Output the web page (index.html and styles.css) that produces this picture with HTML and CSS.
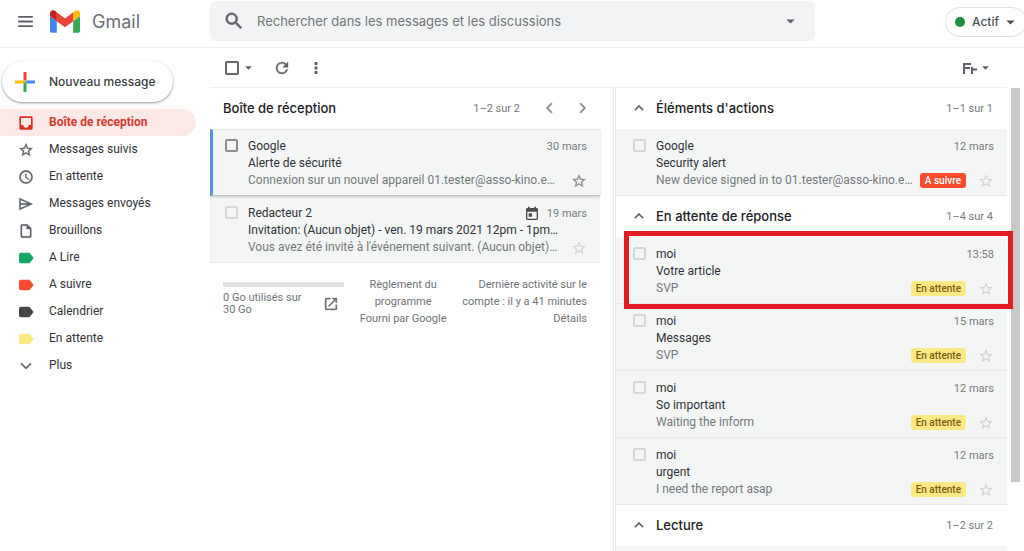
FILE: index.html
```html
<!DOCTYPE html>
<html lang="fr">
<head>
<meta charset="utf-8">
<title>Gmail</title>
<link rel="stylesheet" href="styles.css">
</head>
<body>
<svg class="defs" aria-hidden="true">
  <symbol id="star" viewBox="0 0 24 24"><path d="M22 9.24l-7.19-.62L12 2 9.19 8.63 2 9.24l5.46 4.73L5.82 21 12 17.27 18.18 21l-1.63-7.03L22 9.24zM12 15.4l-3.76 2.27 1-4.28-3.32-2.88 4.38-.38L12 6.1l1.71 4.04 4.38.38-3.32 2.88 1 4.28L12 15.4z"/></symbol>
  <symbol id="tag" viewBox="0 0 24 24"><path d="M17.2 4H4.500Q1.500 4 1.500 7v10q0 3 3 3H17.200L23.500 12z"/></symbol>
  <symbol id="down" viewBox="0 0 10 6"><path d="M0 .5h10L5 5.500z"/></symbol>
  <symbol id="up" viewBox="0 0 24 24"><path d="M12 8l-6 6 1.410 1.410L12 10.830l4.590 4.580L18 14z"/></symbol>
</svg>
<header class="topbar">
  <div class="brand">
    <button class="icon-btn" aria-label="Menu principal"><svg class="menu" viewBox="0 0 16 12"><path d="M0 0h16v2H0zM0 5h16v2H0zM0 10h16v2H0z"/></svg></button>
    <svg class="logo" viewBox="52 42 88 66" aria-hidden="true">
      <path fill="#4285f4" d="M58 108h14V74L52 59v43c0 3.320 2.690 6 6 6"/>
      <path fill="#34a853" d="M120 108h14c3.320 0 6-2.690 6-6V59l-20 15"/>
      <path fill="#fbbc04" d="M120 48v26l20-15v-8c0-7.420-8.470-11.650-14.400-7.200"/>
      <path fill="#ea4335" d="M72 74V48l24 18 24-18v26L96 92"/>
      <path fill="#c5221f" d="M52 51v8l20 15V48l-5.600-4.200c-5.940-4.450-14.400-.22-14.400 7.200"/>
    </svg>
    <span class="brand-name">Gmail</span>
  </div>
  <form class="search" role="search">
    <button type="button" class="icon-btn" aria-label="Rechercher"><svg class="i20" viewBox="0 0 24 24"><path stroke="currentColor" stroke-width=".6" d="M15.500 14h-.79l-.28-.27A6.470 6.470 0 0 0 16 9.500 6.500 6.500 0 1 0 9.500 16c1.610 0 3.090-.59 4.230-1.570l.27.28v.79l5 4.990L20.490 19l-4.990-5zm-6 0C7.010 14 5 11.990 5 9.500S7.010 5 9.500 5 14 7.010 14 9.500 11.990 14 9.500 14z"/></svg></button>
    <input class="search-input" type="text" aria-label="Rechercher" placeholder="Rechercher dans les messages et les discussions">
    <button type="button" class="icon-btn" aria-label="Options de recherche"><svg class="caret big"><use href="#down"/></svg></button>
  </form>
  <button class="status"><span class="dot"></span>Actif<svg class="caret big"><use href="#down"/></svg></button>
</header>
<div class="app">
  <nav class="sidebar">
    <button class="compose"><svg class="plus" viewBox="0 0 20 20"><path fill="#ea4335" d="M8.500 0h3v8.500h-3z"/><path fill="#fbbc04" d="M0 8.500h11.500l-3 3H0z"/><path fill="#34a853" d="M8.500 11.500l3-3V20h-3z"/><path fill="#4285f4" d="M11.500 8.500H20v3h-8.500z"/></svg>Nouveau message</button>
    <a class="nav-item active" href="#"><svg viewBox="0 0 24 24"><path d="M20 2H4a2 2 0 0 0-2 2v16a2 2 0 0 0 2 2h16a2 2 0 0 0 2-2V4a2 2 0 0 0-2-2zm-.5 13H16a4 4 0 0 1-8 0H4.500V4.500h15z"/></svg>Boîte de réception</a>
    <a class="nav-item" href="#"><svg class="bold"><use href="#star"/></svg>Messages suivis</a>
    <a class="nav-item" href="#"><svg class="bold" viewBox="0 0 24 24"><path d="M12 2a10 10 0 1 0 0 20 10 10 0 0 0 0-20zm0 18a8 8 0 1 1 0-16 8 8 0 0 1 0 16zm.5-13H11v6l5.200 3.200.8-1.300-4.500-2.700z"/></svg>En attente</a>
    <a class="nav-item" href="#"><svg class="bold" viewBox="0 0 24 24"><path d="M2 3v18l20-9L2 3zm2 3l11 5H4V6zm0 12v-5h11L4 18z"/></svg>Messages envoyés</a>
    <a class="nav-item" href="#"><svg class="bold" viewBox="0 0 24 24"><path d="M14 2H6a2 2 0 0 0-2 2v16a2 2 0 0 0 2 2h12a2 2 0 0 0 2-2V8l-6-6zM6 20V4h7v5h5v11H6z"/></svg>Brouillons</a>
    <a class="nav-item" href="#"><svg class="green"><use href="#tag"/></svg>A Lire</a>
    <a class="nav-item" href="#"><svg class="red"><use href="#tag"/></svg>A suivre</a>
    <a class="nav-item" href="#"><svg class="dark"><use href="#tag"/></svg>Calendrier</a>
    <a class="nav-item" href="#"><svg class="yellow"><use href="#tag"/></svg>En attente</a>
    <a class="nav-item" href="#"><svg class="bold" viewBox="0 0 24 24"><path d="M5.500 7.500l6.500 6.500 6.500-6.500L20 9l-8 8-8-8z"/></svg>Plus</a>
  </nav>
  <main class="main">
    <div class="toolbar">
      <input class="check strong" type="checkbox" aria-label="Tout sélectionner">
      <button class="icon-btn select-caret" aria-label="Sélectionner"><svg class="caret"><use href="#down"/></svg></button>
      <button class="icon-btn refresh" aria-label="Actualiser"><svg class="i18 bold" viewBox="0 0 24 24"><path d="M17.650 6.350A7.960 7.960 0 0 0 12 4a8 8 0 1 0 7.730 10h-2.080A6 6 0 1 1 12 6c1.660 0 3.140.69 4.220 1.780L13 11h7V4z"/></svg></button>
      <button class="icon-btn" aria-label="Plus d'options"><svg class="i18" viewBox="0 0 24 24"><path d="M10 4h4v4h-4zM10 10h4v4h-4zM10 16h4v4h-4z"/></svg></button>
      <button class="icon-btn lang" aria-label="Outils de saisie"><svg class="fr" viewBox="0 0 14 12"><path d="M0 1h8v2H2v2h5v2H2v5H0zM8 5h2v1.500h4v2h-4V12H8z"/></svg><svg class="caret"><use href="#down"/></svg></button>
    </div>
    <div class="panes">
      <section class="pane inbox">
        <div class="head"><h2>Boîte de réception</h2><span class="count">1–2 sur 2</span>
          <button class="icon-btn pager" aria-label="Précédent"><svg class="i18 bold" viewBox="0 0 24 24"><path d="M15 5l1.500 1.500L11 12l5.500 5.500L15 19l-7-7z"/></svg></button>
          <button class="icon-btn pager" aria-label="Suivant"><svg class="i18 bold" viewBox="0 0 24 24"><path d="M9 5L7.500 6.500 13 12l-5.500 5.500L9 19l7-7z"/></svg></button>
        </div>
        <article class="mail current">
          <input class="check mid" type="checkbox" aria-label="Google">
          <div class="body">
            <div class="line"><span class="from">Google</span><time>30 mars</time></div>
            <div class="line subject">Alerte de sécurité</div>
            <div class="line"><span class="snippet">Connexion sur un nouvel appareil 01.tester@asso-kino.e…</span><button class="icon-btn fav" aria-label="Suivre"><svg class="i16 bold"><use href="#star"/></svg></button></div>
          </div>
        </article>
        <article class="mail">
          <input class="check" type="checkbox" aria-label="Redacteur 2">
          <div class="body">
            <div class="line"><span class="from">Redacteur 2</span><svg class="cal" viewBox="0 0 24 24"><path d="M19 3h-1V1h-2.500v2h-7V1H6v2H5a2 2 0 0 0-2 2v14a2 2 0 0 0 2 2h14a2 2 0 0 0 2-2V5a2 2 0 0 0-2-2zm0 16H5V8.500h14V19zM7 11h5v5H7z"/></svg><time>19 mars</time></div>
            <div class="line subject">Invitation: (Aucun objet) - ven. 19 mars 2021 12pm - 1pm…</div>
            <div class="line"><span class="snippet">Vous avez été invité à l'événement suivant. (Aucun objet)…</span><button class="icon-btn fav" aria-label="Suivre"><svg class="i16"><use href="#star"/></svg></button></div>
          </div>
        </article>
        <footer class="foot">
          <div class="quota">
            <div class="bar"></div>
            <div class="usage"><span>0 Go utilisés sur<br>30 Go</span><a href="#" aria-label="Gérer"><svg class="i16 bold" viewBox="0 0 24 24"><path d="M19 19H5V5h6V3H5a2 2 0 0 0-2 2v14a2 2 0 0 0 2 2h14a2 2 0 0 0 2-2v-6h-2v6zM14 3v2h3.590l-9.830 9.830 1.410 1.410L19 6.410V10h2V3h-7z"/></svg></a></div>
          </div>
          <div class="terms">Règlement du<br>programme<br>Fourni par Google</div>
          <div class="activity">Dernière activité sur le<br>compte : il y a 41 minutes<br>Détails</div>
        </footer>
      </section>
      <section class="pane side">
        <div class="head"><button class="icon-btn fold" aria-label="Réduire"><svg class="i18 bold"><use href="#up"/></svg></button><h2>Éléments d'actions</h2><span class="count">1–1 sur 1</span></div>
        <article class="mail">
          <input class="check" type="checkbox" aria-label="Google">
          <div class="body">
            <div class="line"><span class="from">Google</span><time>12 mars</time></div>
            <div class="line subject">Security alert</div>
            <div class="line"><span class="snippet">New device signed in to 01.tester@asso-kino.e…</span><span class="label todo">A suivre</span><button class="icon-btn fav" aria-label="Suivre"><svg class="i16"><use href="#star"/></svg></button></div>
          </div>
        </article>
        <div class="head"><button class="icon-btn fold" aria-label="Réduire"><svg class="i18 bold"><use href="#up"/></svg></button><h2>En attente de réponse</h2><span class="count">1–4 sur 4</span></div>
        <article class="mail framed">
          <input class="check" type="checkbox" aria-label="Votre article">
          <div class="body">
            <div class="line"><span class="from">moi</span><time>13:58</time></div>
            <div class="line subject">Votre article</div>
            <div class="line"><span class="snippet">SVP</span><span class="label">En attente</span><button class="icon-btn fav" aria-label="Suivre"><svg class="i16"><use href="#star"/></svg></button></div>
          </div>
        </article>
        <article class="mail">
          <input class="check" type="checkbox" aria-label="Messages">
          <div class="body">
            <div class="line"><span class="from">moi</span><time>15 mars</time></div>
            <div class="line subject">Messages</div>
            <div class="line"><span class="snippet">SVP</span><span class="label">En attente</span><button class="icon-btn fav" aria-label="Suivre"><svg class="i16"><use href="#star"/></svg></button></div>
          </div>
        </article>
        <article class="mail">
          <input class="check" type="checkbox" aria-label="So important">
          <div class="body">
            <div class="line"><span class="from">moi</span><time>12 mars</time></div>
            <div class="line subject">So important</div>
            <div class="line"><span class="snippet">Waiting the inform</span><span class="label">En attente</span><button class="icon-btn fav" aria-label="Suivre"><svg class="i16"><use href="#star"/></svg></button></div>
          </div>
        </article>
        <article class="mail">
          <input class="check" type="checkbox" aria-label="urgent">
          <div class="body">
            <div class="line"><span class="from">moi</span><time>12 mars</time></div>
            <div class="line subject">urgent</div>
            <div class="line"><span class="snippet">I need the report asap</span><span class="label">En attente</span><button class="icon-btn fav" aria-label="Suivre"><svg class="i16"><use href="#star"/></svg></button></div>
          </div>
        </article>
        <div class="head"><button class="icon-btn fold" aria-label="Réduire"><svg class="i18 bold"><use href="#up"/></svg></button><h2>Lecture</h2><span class="count">1–2 sur 2</span></div>
        <div class="next"></div>
      </section>
      <div class="scroll"><div class="thumb"></div></div>
    </div>
  </main>
</div>
</body>
</html>
```
FILE: styles.css
```css
* { box-sizing: border-box; }
body {
  margin: 0;
  height: 100vh;
  display: flex;
  flex-direction: column;
  overflow: hidden;
  background: #fff;
  color: #303236;
  font: 12px/17px Roboto, sans-serif;
}
.defs { display: none; }
svg { display: block; flex: none; fill: currentColor; }
.bold { stroke: currentColor; stroke-width: .5; }
a { color: inherit; text-decoration: none; }
button { font: inherit; color: inherit; background: none; border: 0; padding: 0; }
.icon-btn { display: flex; align-items: center; justify-content: center; color: #5f6368; flex: none; }
.i16 { width: 16px; height: 16px; }
.i18 { width: 18px; height: 18px; }
.i20 { width: 22px; height: 22px; }
.caret { width: 7px; height: 4px; }
.caret.big { width: 9px; height: 5px; }

.topbar { display: flex; flex: none; height: 48px; border-bottom: 1px solid #eceeef; }
.brand { display: flex; align-items: center; width: 210px; padding: 0 0 4px 18px; }
.menu { width: 15px; height: 11px; }
.logo { width: 30px; height: 23px; margin-left: 17px; }
.brand-name { margin-left: 12px; font: 18px/24px Inter, sans-serif; color: #6b6f74; }
.search { display: flex; align-items: center; flex: 1; height: 40px; margin: 1px 0 0; padding: 0 20px 0 13px; background: #f1f3f4; border-radius: 6px; }
.search-input { flex: 1; min-width: 0; margin-left: 12px; padding: 0; border: 0; outline: 0; background: none; font: 13px/20px Inter, sans-serif; color: #5f6368; }
.search-input::placeholder { color: #72767a; opacity: 1; }
.status { display: flex; align-items: center; gap: 7px; width: 82px; height: 30px; margin: 7px -3px 0 130px; padding-left: 9px; border: 1px solid #dfe1e4; border-radius: 15px; font: 500 12px/20px Inter, sans-serif; color: #4d5156; }
.dot { width: 10px; height: 10px; border-radius: 50%; background: #1e8e3e; }

.app { display: flex; flex: 1; min-height: 0; }
.sidebar { width: 210px; flex: none; padding-top: 13px; }
.compose { display: flex; align-items: center; gap: 14px; width: 171px; height: 41px; margin: 0 0 7px 2px; padding-left: 13px; border-radius: 21px; box-shadow: 0 1px 2px rgba(60,64,67,.4), 0 1px 3px rgba(60,64,67,.2); font: 500 12px/20px Inter, sans-serif; color: #3c4043; white-space: nowrap; }
.plus { width: 20px; height: 20px; }
.nav-item { display: flex; align-items: center; gap: 15px; height: 27px; margin-right: 14px; padding-left: 18px; border-radius: 0 14px 14px 0; color: #303236; }
.nav-item svg { width: 16px; height: 16px; color: #5f6368; }
.nav-item.active { background: #fce8e6; color: #d23c31; font-weight: 700; }
.nav-item.active svg { color: #d93025; }
.nav-item .green { color: #16a766; }
.nav-item .red { color: #fb4c2f; }
.nav-item .dark { color: #464646; }
.nav-item .yellow { color: #fbe983; }

.main { flex: 1; min-width: 0; display: flex; flex-direction: column; }
.toolbar { display: flex; align-items: center; flex: none; height: 40px; margin-right: 17px; padding: 1px 18px 0 15px; border-bottom: 1px solid #f1f1f1; }
.select-caret { margin: 0 21px 0 6px; }
.refresh { margin-right: 16px; }
.lang { margin-left: auto; gap: 5px; }
.fr { width: 14px; height: 12px; }
.check { appearance: none; flex: none; width: 13px; height: 13px; margin: 1px 0 0; border: 2px solid #d5d7d7; border-radius: 2px; }
.check.mid { border-color: #8b8e91; }
.check.strong { margin: 0; width: 14px; height: 14px; border-color: #66696d; }

.panes { display: grid; grid-template-columns: minmax(0, 404fr) minmax(0, 393fr) auto; flex: 1; min-height: 0; overflow: hidden; }
.inbox { padding-right: 13px; border-right: 1px solid #ebebeb; }
.side { display: flex; flex-direction: column; min-height: 0; margin-left: 1px; border-left: 1px solid #ebebeb; }
.head { display: flex; align-items: center; flex: none; height: 41px; padding: 0 14px 1px 13px; }
.side .head { padding-left: 14px; }
.head h2 { flex: 1; margin: 0; font: 500 13px/20px Inter, sans-serif; color: #202124; }
.count, .line time { font-size: 11px; color: #777b7f; }
.pager { color: #8b8f93; margin-left: 16px; width: 18px; }
.pager:last-child { margin-right: -6px; }
.inbox .count { margin-right: 4px; }
.fold { margin-right: 8px; }
.mail { display: flex; flex: none; position: relative; gap: 10px; height: 67px; padding: 9px 13px 6px 15px; background: #f4f6f6; border-bottom: 1px solid #e8eaea; }
.side .mail { padding-left: 17px; }
.mail.current { border-left: 3px solid #5a93dc; padding-left: 12px; border-top: 1px solid #e4e6e6; padding-top: 8px; border-bottom-color: #c3c6c8; box-shadow: 0 1px 2px rgba(60,64,67,.25); z-index: 1; }
.mail.framed { z-index: 2; }
.mail.framed::after { content: ""; position: absolute; inset: -6px -6px -6px 8px; border: 5px solid #e31b23; pointer-events: none; }
.body { flex: 1; min-width: 0; }
.line { display: flex; align-items: center; height: 17px; white-space: nowrap; }
.from, .snippet { flex: 1; min-width: 0; }
.snippet { color: #75787c; }
.cal { width: 16px; height: 16px; margin-right: 7px; color: #4a4d51; }
.fav { width: 16px; margin-left: 12px; color: #cdd0d1; }
.current .fav { color: #8b8e91; }
.label { padding: 0 5px; border-radius: 3px; background: #fbe983; color: #7a5a12; font: 500 10px/15px Roboto, sans-serif; }
.label.todo { background: #fb4c2f; color: #fff; }
.foot { display: flex; justify-content: space-between; padding: 13px 13px 0; font-size: 11px; color: #6f7377; }
.quota { width: 121px; }
.bar { height: 5px; margin: 6px 0 5px; background: #dfe0e2; border-radius: 1px; }
.usage { display: flex; justify-content: space-between; align-items: center; padding-right: 5px; line-height: 12px; }
.terms { text-align: center; }
.activity { text-align: right; }
.next { flex: 1; min-height: 0; background: #f4f6f6; }
.scroll { width: 9px; margin: 0 4px; }
.thumb { height: 85%; background: #c8c8c8; }
```
